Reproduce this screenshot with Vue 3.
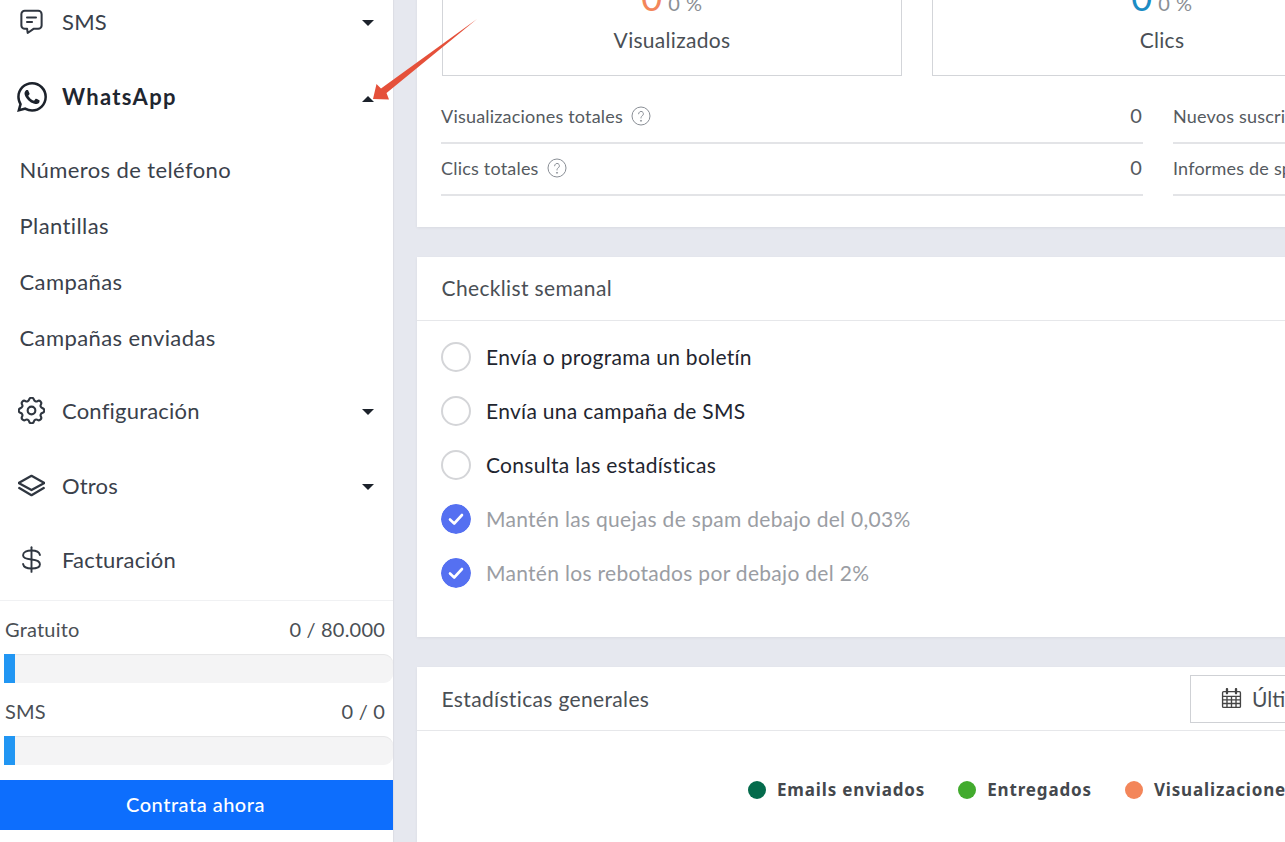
<script setup>
const subItems = ['Números de teléfono', 'Plantillas', 'Campañas', 'Campañas enviadas']
const tasks = [
  { text: 'Envía o programa un boletín', done: false },
  { text: 'Envía una campaña de SMS', done: false },
  { text: 'Consulta las estadísticas', done: false },
  { text: 'Mantén las quejas de spam debajo del 0,03%', done: true },
  { text: 'Mantén los rebotados por debajo del 2%', done: true },
]
const usage = [
  { label: 'Gratuito', value: '0 / 80.000' },
  { label: 'SMS', value: '0 / 0' },
]
const legend = [
  { label: 'Emails enviados', color: '#056b4c' },
  { label: 'Entregados', color: '#42ab2e' },
  { label: 'Visualizaciones', color: '#f3865a' },
]
</script>

<template>
  <div class="page">
    <aside class="sidebar">
      <nav class="nav">
        <div class="nav-row">
          <svg class="icon" viewBox="0 0 24 24" fill="none" stroke="currentColor" stroke-width="1.8" stroke-linejoin="round" stroke-linecap="round"><path d="M6 2.5h12a3 3 0 0 1 3 3v10a3 3 0 0 1-3 3h-4.2L8.6 22.2l-.5-3.7H6a3 3 0 0 1-3-3v-10a3 3 0 0 1 3-3z"/><path d="M8 8.5h8M8 12.5h4.5"/></svg>
          <span class="nav-label">SMS</span>
          <i class="caret"></i>
        </div>
        <div class="nav-row active">
          <svg class="icon wa" viewBox="0 0 24 24" fill="currentColor"><path d="M17.472 14.382c-.297-.149-1.758-.867-2.03-.967-.273-.099-.471-.148-.67.15-.197.297-.767.966-.94 1.164-.173.199-.347.223-.644.075-.297-.15-1.255-.463-2.39-1.475-.883-.788-1.48-1.761-1.653-2.059-.173-.297-.018-.458.13-.606.134-.133.298-.347.446-.52.149-.174.198-.298.298-.497.099-.198.05-.371-.025-.52-.075-.149-.669-1.612-.916-2.207-.242-.579-.487-.5-.669-.51-.173-.008-.371-.01-.57-.01-.198 0-.52.074-.792.372-.272.297-1.04 1.016-1.04 2.479 0 1.462 1.065 2.875 1.213 3.074.149.198 2.096 3.2 5.077 4.487.709.306 1.262.489 1.694.625.712.227 1.36.195 1.871.118.571-.085 1.758-.719 2.006-1.413.248-.694.248-1.289.173-1.413-.074-.124-.272-.198-.57-.347m-5.421 7.403h-.004a9.87 9.87 0 01-5.031-1.378l-.361-.214-3.741.982.998-3.648-.235-.374a9.86 9.86 0 01-1.51-5.26c.001-5.45 4.436-9.884 9.888-9.884 2.64 0 5.122 1.03 6.988 2.898a9.825 9.825 0 012.893 6.994c-.003 5.45-4.437 9.884-9.885 9.884m8.413-18.297A11.815 11.815 0 0012.05 0C5.495 0 .16 5.335.157 11.892c0 2.096.547 4.142 1.588 5.945L.057 24l6.305-1.654a11.882 11.882 0 005.683 1.448h.005c6.554 0 11.89-5.335 11.893-11.893a11.821 11.821 0 00-3.48-8.413z"/></svg>
          <span class="nav-label">WhatsApp</span>
          <i class="caret up"></i>
        </div>
        <ul class="sub">
          <li v-for="item in subItems" :key="item">{{ item }}</li>
        </ul>
        <div class="nav-row">
          <svg class="icon" viewBox="2.5 2.5 19 19" fill="none" stroke="currentColor" stroke-width="1.5" stroke-linejoin="round"><path d="M10.325 4.317c.426-1.756 2.924-1.756 3.35 0a1.724 1.724 0 0 0 2.573 1.066c1.543-.94 3.31.826 2.37 2.37a1.724 1.724 0 0 0 1.065 2.572c1.756.426 1.756 2.924 0 3.35a1.724 1.724 0 0 0-1.066 2.573c.94 1.543-.826 3.31-2.37 2.37a1.724 1.724 0 0 0-2.572 1.065c-.426 1.756-2.924 1.756-3.35 0a1.724 1.724 0 0 0-2.573-1.066c-1.543.94-3.31-.826-2.37-2.37a1.724 1.724 0 0 0-1.065-2.572c-1.756-.426-1.756-2.924 0-3.35a1.724 1.724 0 0 0 1.066-2.573c-.94-1.543.826-3.31 2.37-2.37 1 .608 2.296.07 2.572-1.065z"/><circle cx="12" cy="12" r="2.7"/></svg>
          <span class="nav-label">Configuración</span>
          <i class="caret"></i>
        </div>
        <div class="nav-row">
          <svg class="icon" viewBox="1.5 1.5 21 21" fill="none" stroke="currentColor" stroke-width="1.8" stroke-linejoin="round" stroke-linecap="round"><path d="M12 4.5 22 10 12 15.5 2 10z"/><path d="M2.5 14 12 19.5l9.5-5.5"/></svg>
          <span class="nav-label">Otros</span>
          <i class="caret"></i>
        </div>
        <div class="nav-row tight">
          <svg class="icon" viewBox="0 0 24 24" fill="none" stroke="currentColor" stroke-width="1.7" stroke-linecap="round"><path d="M19.5 8C19 5.5 16 4 12 4S4.5 5.5 4.5 8.2s3 3.4 7.5 3.8 7.5 1.5 7.5 4.2-3.5 3.8-7.5 3.8-7-1.5-7.5-4"/><path d="M12 1v22"/></svg>
          <span class="nav-label">Facturación</span>
        </div>
      </nav>
      <div class="usage">
        <div v-for="u in usage" :key="u.label" class="usage-item">
          <div class="usage-head"><span>{{ u.label }}</span><span>{{ u.value }}</span></div>
          <div class="track"><div class="fill"></div></div>
        </div>
        <button class="cta">Contrata ahora</button>
      </div>
    </aside>

    <main class="main">
      <section class="card stats">
        <div class="tiles">
          <div class="tile">
            <div class="tile-num"><b class="orange">0</b> 0 %</div>
            <div class="tile-label">Visualizados</div>
          </div>
          <div class="tile">
            <div class="tile-num"><b class="blue">0</b> 0 %</div>
            <div class="tile-label">Clics</div>
          </div>
        </div>
        <div class="metrics">
          <div class="metric">
            <span class="metric-name">Visualizaciones totales <svg class="help" viewBox="0 0 20 20" fill="none" stroke="#8a8f96" stroke-width="1"><circle cx="10" cy="10" r="9"/><path d="M7.6 7.8a2.4 2.4 0 1 1 3.7 2c-.9.6-1.3 1-1.3 2.2" stroke-linecap="round"/><circle cx="10" cy="14.8" r=".5" fill="#8a8f96"/></svg></span>
            <span class="metric-val">0</span>
          </div>
          <div class="metric">
            <span class="metric-name">Nuevos suscriptores</span>
            <span class="metric-val">0</span>
          </div>
          <div class="metric">
            <span class="metric-name">Clics totales <svg class="help" viewBox="0 0 20 20" fill="none" stroke="#8a8f96" stroke-width="1"><circle cx="10" cy="10" r="9"/><path d="M7.6 7.8a2.4 2.4 0 1 1 3.7 2c-.9.6-1.3 1-1.3 2.2" stroke-linecap="round"/><circle cx="10" cy="14.8" r=".5" fill="#8a8f96"/></svg></span>
            <span class="metric-val">0</span>
          </div>
          <div class="metric">
            <span class="metric-name">Informes de spam</span>
            <span class="metric-val">0</span>
          </div>
        </div>
      </section>

      <section class="card">
        <header class="card-head">Checklist semanal</header>
        <ul class="tasks">
          <li v-for="t in tasks" :key="t.text" class="task" :class="{ done: t.done }">
            <svg v-if="t.done" class="check" viewBox="0 0 30 30"><circle cx="15" cy="15" r="15" fill="#5570f1"/><path d="M9 15.5l4.2 4L21 11" fill="none" stroke="#fff" stroke-width="2.6" stroke-linecap="round" stroke-linejoin="round"/></svg>
            <span v-else class="radio"></span>
            <span class="task-text">{{ t.text }}</span>
          </li>
        </ul>
      </section>

      <section class="card last">
        <header class="card-head with-btn">
          <span>Estadísticas generales</span>
          <button class="range">
            <svg class="cal" viewBox="0 0 20 20" fill="none" stroke="#444" stroke-width="1.3"><rect x="1.5" y="3.5" width="17" height="15" rx="1"/><path d="M1.5 8h17M1.5 11.3h17M1.5 14.8h17M5.7 8v10.5M10 8v10.5M14.3 8v10.5"/><path d="M5.7 1v4M14.3 1v4" stroke-width="2.2" stroke-linecap="round"/></svg>
            <span>Últimos 30 días</span>
          </button>
        </header>
        <div class="legend">
          <span v-for="l in legend" :key="l.label" class="legend-item">
            <i class="dot" :style="{ background: l.color }"></i>{{ l.label }}
          </span>
        </div>
      </section>
    </main>

    <svg class="annotation" viewBox="358 0 130 110" fill="#e5503a"><path d="M373 99 376.5 84 381 88.5 477 19 386.5 93 389 99.5z"/></svg>
  </div>
</template>

<style>
html, body { margin: 0; background: #e6e8ef; }
</style>

<style scoped>
.page {
  position: relative;
  display: flex;
  gap: 24px;
  height: 842px;
  width: 1285px;
  overflow: hidden;
  background: #e6e8ef;
  font-family: Lato, "Open Sans", sans-serif;
}
.sidebar {
  flex: 0 0 393px;
  display: flex;
  flex-direction: column;
  background: #fff;
  color: #3a414b;
  box-shadow: 1px 0 1px rgba(0,0,0,.04);
}
.nav { margin-top: -16px; flex: 0 0 616px; border-bottom: 1px solid #f0f1f3; }
.nav-row {
  display: flex;
  align-items: center;
  height: 75px;
  padding: 0 19px 0 18px;
  font-size: 22px;
}
.nav-row.tight { margin-top: -1px; }
.icon { width: 27px; height: 27px; flex: none; color: #2f3640; }
.icon.wa { width: 30px; height: 30px; margin-left: -1.5px; margin-right: -1.5px; color: #1c222b; }
.nav-label { margin-left: 17px; flex: 1; letter-spacing: .2px; }
.active .nav-label { font-weight: 700; color: #1f2630; letter-spacing: 1.3px; }
.caret {
  width: 0; height: 0;
  margin-top: 2px;
  border-left: 6px solid transparent;
  border-right: 6px solid transparent;
  border-top: 6px solid #1c222b;
}
.caret.up { border-top: 0; border-bottom: 6px solid #1c222b; margin-top: 4px; }
.sub { list-style: none; margin: 8px 0 0; padding: 0 0 0 19.5px; font-size: 22px; }
.sub li { height: 56px; line-height: 56px; letter-spacing: .4px; }
.sub + .nav-row { margin-top: 7px; }
.usage { padding-top: 15px; flex: 1; font-size: 20px; color: #4a4f55; letter-spacing: .2px; }
.usage-item { padding-left: 4px; }
.usage-head { display: flex; justify-content: space-between; padding: 0 8px 0 1px; height: 26px; line-height: 26px; margin-bottom: 12px; }
.track { height: 29px; margin-bottom: 15px; background: #f4f4f5; border-radius: 0 9px 9px 0; box-shadow: inset 0 1px 1px rgba(0,0,0,.06); }
.fill { width: 11px; height: 29px; background: #2196f3; }
.cta {
  display: block;
  width: 100%;
  height: 50px;
  padding: 0 2px 3px 0;
  border: 0;
  background: #0d6efd;
  color: #fff;
  font: 500 20px Lato, sans-serif;
  letter-spacing: .5px;
}
.main { flex: 0 0 1100px; min-width: 0; margin-top: -73px; display: flex; flex-direction: column; gap: 30px; }
.card { background: #fff; box-shadow: 0 1px 3px rgba(0,0,0,.06); }
.stats { padding: 24px 25px 0; height: 300px; box-sizing: border-box; }
.tiles { display: grid; grid-template-columns: 460px 460px; gap: 30px; }
.tile {
  height: 125px;
  border: 1px solid #d3d5d9;
  box-sizing: border-box;
  text-align: center;
  color: #4a4f55;
  padding-top: 32px;
}
.tile-num { font-size: 20px; line-height: 26px; color: #8b8f95; letter-spacing: .5px; }
.tile-num b { font-size: 36px; font-weight: 400; line-height: 26px; }
.orange { color: #f3865a; }
.blue { color: #1c8cc4; }
.tile-label { font-size: 21px; line-height: 28px; margin-top: 10px; letter-spacing: .3px; }
.metrics { display: grid; grid-template-columns: 701px 701px; column-gap: 30px; margin-top: 16px; }
.metric {
  display: flex;
  justify-content: space-between;
  align-items: center;
  height: 52px;
  border-bottom: 2px solid #e3e4e7;
  box-sizing: border-box;
  font-size: 18px;
  color: #555a60;
  padding-bottom: 2px;
  margin-left: -1px;
  letter-spacing: .2px;
}
.metric:nth-child(even) { margin-left: 0; }
.metric-name { display: inline-flex; align-items: center; gap: 8px; }
.metric-val { font-size: 20px; padding: 0 1px 2px 0; }
.help { width: 20px; height: 20px; }
.card-head {
  height: 63px;
  padding: 0 25px 0 24.5px;
  line-height: 62px;
  font-size: 21px;
  letter-spacing: .35px;
  color: #4a4f55;
  border-bottom: 1px solid #e6e7ea;
}
.with-btn { display: flex; justify-content: space-between; align-items: center; }
.range {
  display: flex;
  align-items: center;
  gap: 10px;
  width: 302px;
  height: 48px;
  padding: 0 30px;
  background: #fff;
  border: 1px solid #cfd1d5;
  color: #4a4f55;
  font: 21px Lato, sans-serif;
  white-space: nowrap;
}
.cal { width: 21px; height: 21px; flex: none; }
.tasks { list-style: none; margin: 0; padding: 9px 24px 36px; height: 316px; box-sizing: border-box; }
.task { display: flex; align-items: center; gap: 15px; height: 54px; font-size: 21px; color: #1f2630; letter-spacing: .3px; }
.task-text { margin-bottom: 2px; }
.task.done { color: #9a9da3; }
.radio, .check { width: 30px; height: 30px; flex: none; box-sizing: border-box; border-radius: 50%; }
.radio { border: 2px solid #d4d5d8; }
.last { flex: 1; }
.legend { display: flex; gap: 33px; padding: 47px 0 0 331px; font: 700 17px "Noto Sans", sans-serif; color: #44484d; letter-spacing: .85px; }
.legend-item { display: inline-flex; align-items: center; gap: 11px; white-space: nowrap; }
.dot { width: 18px; height: 18px; border-radius: 50%; }
.annotation { position: absolute; left: 358px; top: 0; width: 130px; height: 110px; }
</style>
